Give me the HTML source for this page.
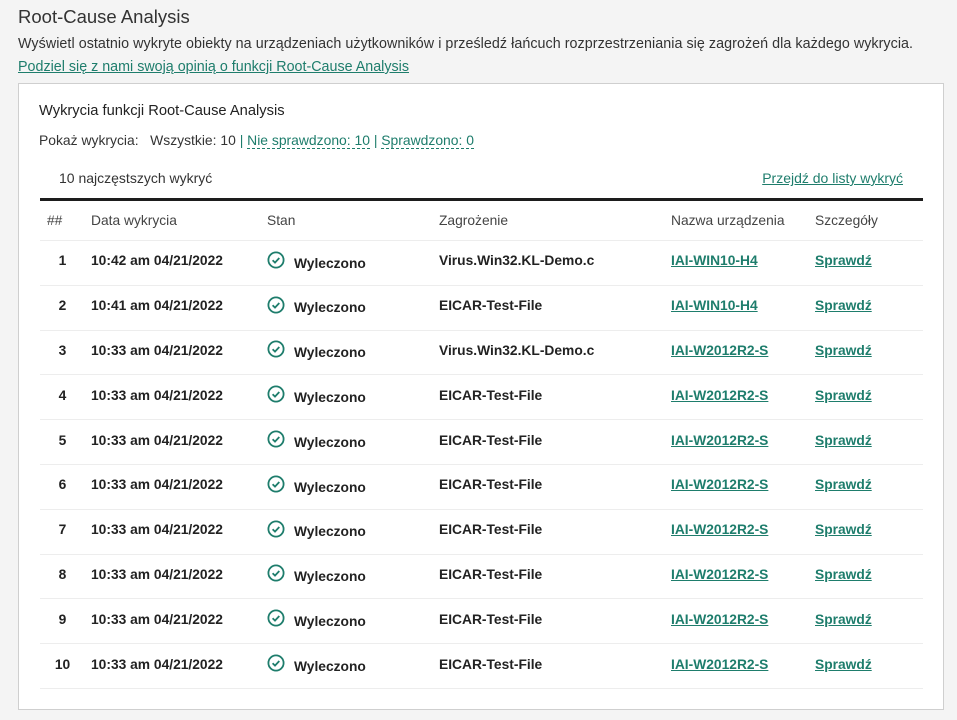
<!DOCTYPE html>
<html><head><meta charset="utf-8"><style>
*{margin:0;padding:0;box-sizing:border-box}
body{width:957px;height:720px;background:#f4f4f4;font-family:"Liberation Sans",sans-serif;color:#2d2d2d;position:relative;overflow:hidden}
.a{position:absolute;white-space:nowrap}
a{color:#1e7d6c}
.panel{position:absolute;left:18px;top:83px;width:926px;height:627px;background:#fff;border:1px solid #cfcfcf}
.dash{color:#1e7d6c;border-bottom:1px dashed #1e7d6c;text-decoration:none}
table{position:absolute;left:40px;top:198px;width:883px;border-collapse:collapse;border-top:3px solid #1d1d1d}
td,th{text-align:left;font-size:13.8px;padding:0;white-space:nowrap}
th{font-weight:normal;color:#444;height:41px}
tr{border-bottom:1px solid #ededed}
td{height:44.8px;font-weight:bold;color:#222;padding-bottom:4px}
td a{color:#1e7d6c;text-decoration:underline}
.ic{display:inline-block;vertical-align:middle;margin-right:9px;position:relative;top:-1px}
</style></head><body>
<div class="a" style="left:18px;top:6px;font-size:18.5px;color:#333">Root-Cause Analysis</div>
<div class="a" style="left:18px;top:36px;font-size:14.3px;color:#333;letter-spacing:0.05px">Wyświetl ostatnio wykryte obiekty na urządzeniach użytkowników i prześledź łańcuch rozprzestrzeniania się zagrożeń dla każdego wykrycia.</div>
<div class="a" style="left:18px;top:59px;font-size:14.3px"><a href="#">Podziel się z nami swoją opinią o funkcji Root-Cause Analysis</a></div>
<div class="panel"></div>
<div class="a" style="left:39px;top:103px;font-size:14.7px;color:#222">Wykrycia funkcji Root-Cause Analysis</div>
<div class="a" style="left:39px;top:132px;font-size:13.9px;color:#333">Pokaż wykrycia:&nbsp;&nbsp; Wszystkie: 10 <span style="color:#1e7d6c">|</span> <span class="dash">Nie sprawdzono: 10</span> <span style="color:#1e7d6c">|</span> <span class="dash">Sprawdzono: 0</span></div>
<div class="a" style="left:59px;top:170px;font-size:14px;color:#333">10 najczęstszych wykryć</div>
<div class="a" style="right:54px;top:170px;font-size:14px"><a href="#">Przejdź do listy wykryć</a></div>
<table>
<tr><th style="width:51px;padding-left:7px">##</th><th style="width:176px">Data wykrycia</th><th style="width:172px">Stan</th><th style="width:232px">Zagrożenie</th><th style="width:144px">Nazwa urządzenia</th><th>Szczegóły</th></tr>
</table>
<script>
var rows=[["1","10:42 am 04/21/2022","Virus.Win32.KL-Demo.c","IAI-WIN10-H4"],["2","10:41 am 04/21/2022","EICAR-Test-File","IAI-WIN10-H4"],["3","10:33 am 04/21/2022","Virus.Win32.KL-Demo.c","IAI-W2012R2-S"]];
for(var i=4;i<=10;i++)rows.push([""+i,"10:33 am 04/21/2022","EICAR-Test-File","IAI-W2012R2-S"]);
var ic='<svg class="ic" width="18" height="18" viewBox="0 0 18 18"><circle cx="9" cy="9" r="7.6" fill="none" stroke="#1e7d6c" stroke-width="1.8"/><path d="M5.6 9.2l2.4 2.4 4.3-4.6" fill="none" stroke="#1e7d6c" stroke-width="1.8"/></svg>';
var h="";rows.forEach(function(r){h+='<tr><td style="text-align:center;padding-right:6px">'+r[0]+'</td><td>'+r[1]+'</td><td>'+ic+'<span style="position:relative;top:3px">Wyleczono</span></td><td>'+r[2]+'</td><td><a href="#">'+r[3]+'</a></td><td><a href="#">Sprawdź</a></td></tr>'});
document.querySelector("table").insertAdjacentHTML("beforeend",h);
</script>
</body></html>
